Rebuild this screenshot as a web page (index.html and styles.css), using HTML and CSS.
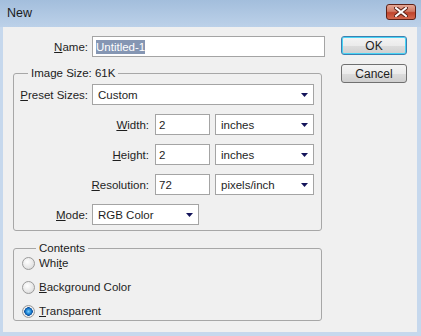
FILE: index.html
```html
<!DOCTYPE html>
<html lang="en">
<head>
    <meta charset="UTF-8">
    <title>New</title>
    <link rel="stylesheet" href="styles.css">
</head>
<body>
<div class="window">
    <div class="titlebar">
        <span class="title">New</span>
        <span class="close">
            <svg width="14" height="10" viewBox="0 0 14 10">
                <path d="M2 1 L12 9 M12 1 L2 9" stroke="#5b2016" stroke-width="4" stroke-linecap="square"/>
                <path d="M2 1 L12 9 M12 1 L2 9" stroke="#ffffff" stroke-width="2" stroke-linecap="square"/>
            </svg>
        </span>
    </div>
    <div class="client">
        <div class="main">
            <div class="row">
                <span class="lbl lbl-short"><u>N</u>ame:</span>
                <div class="field name-field"><span class="selected">Untitled-1</span></div>
            </div>

            <fieldset class="group size-group">
                <legend>Image Size: 61K</legend>
                <div class="row">
                    <span class="lbl lbl-short"><u>P</u>reset Sizes:</span>
                    <div class="select preset-select">Custom<svg class="arrow" width="7" height="4" viewBox="0 0 7 4"><polygon points="0,0 7,0 3.5,4" fill="#14145a"/></svg></div>
                </div>
                <div class="row">
                    <span class="lbl lbl-long"><u>W</u>idth:</span>
                    <div class="field num-field">2</div>
                    <div class="select unit-select">inches<svg class="arrow" width="7" height="4" viewBox="0 0 7 4"><polygon points="0,0 7,0 3.5,4" fill="#14145a"/></svg></div>
                </div>
                <div class="row">
                    <span class="lbl lbl-long"><u>H</u>eight:</span>
                    <div class="field num-field">2</div>
                    <div class="select unit-select">inches<svg class="arrow" width="7" height="4" viewBox="0 0 7 4"><polygon points="0,0 7,0 3.5,4" fill="#14145a"/></svg></div>
                </div>
                <div class="row">
                    <span class="lbl lbl-long"><u>R</u>esolution:</span>
                    <div class="field num-field">72</div>
                    <div class="select unit-select">pixels/inch<svg class="arrow" width="7" height="4" viewBox="0 0 7 4"><polygon points="0,0 7,0 3.5,4" fill="#14145a"/></svg></div>
                </div>
                <div class="row">
                    <span class="lbl lbl-short"><u>M</u>ode:</span>
                    <div class="select mode-select">RGB Color<svg class="arrow" width="7" height="4" viewBox="0 0 7 4"><polygon points="0,0 7,0 3.5,4" fill="#14145a"/></svg></div>
                </div>
            </fieldset>

            <fieldset class="group contents-group">
                <legend>Contents</legend>
                <div class="radio-list">
                    <div class="radio-row"><span class="radio"></span>Whi<u>t</u>e</div>
                    <div class="radio-row"><span class="radio"></span><u>B</u>ackground Color</div>
                    <div class="radio-row"><span class="radio checked"></span><u>T</u>ransparent</div>
                </div>
            </fieldset>
        </div>

        <div class="buttons">
            <div class="btn btn-default">OK</div>
            <div class="btn">Cancel</div>
        </div>
    </div>
</div>
</body>
</html>
```

FILE: styles.css
```css
body {
    margin: 0;
    font-family: "Liberation Sans", Arial, sans-serif;
    font-size: 11.5px;
    color: #1e1e1e;
}
.window {
    width: 421px;
    height: 336px;
    display: flex;
    flex-direction: column;
    background: #c6d8ed;
}
.titlebar {
    height: 27px;
    display: flex;
    align-items: flex-start;
    justify-content: space-between;
    background: linear-gradient(#a3bedc, #bcd1e9);
}
.title {
    font-size: 12.5px;
    color: #1b1b1b;
    padding: 6px 0 0 7px;
}
.close {
    width: 28px;
    height: 14px;
    margin: 4px 5px 0 0;
    border: 1px solid #5e2218;
    border-radius: 3px;
    background: linear-gradient(#e4a795, #d17a64 45%, #c0442c 55%, #d4694f);
    display: flex;
    align-items: center;
    justify-content: center;
}
.client {
    flex: 1;
    margin: 0 4px 4px 3px;
    background: #f0f0f0;
    display: flex;
}
.main {
    width: 312px;
    padding: 9px 0 0 10px;
}
.row {
    display: flex;
    align-items: center;
    height: 21px;
    margin-bottom: 9px;
}
.row:last-child {
    margin-bottom: 0;
}
.lbl {
    text-align: right;
    flex-shrink: 0;
}
.lbl-short {
    width: 74px;
    margin-right: 4px;
}
.main > .row .lbl-short {
    width: 75px;
}
.lbl-long {
    width: 135px;
    margin-right: 6px;
}
.field, .select {
    box-sizing: border-box;
    height: 21px;
    background: #fff;
    border: 1px solid #a4a4a4;
    display: flex;
    align-items: center;
    flex-shrink: 0;
}
.field {
    padding-left: 3px;
}
.name-field {
    width: 233px;
}
.selected {
    background: #8596b3;
    color: #fff;
    padding: 1px 0;
}
.num-field {
    width: 55px;
    margin-right: 5px;
}
.select {
    justify-content: space-between;
    padding: 0 5px 0 5px;
}
.arrow {
    margin-top: 1px;
}
.preset-select {
    width: 222px;
}
.unit-select {
    width: 99px;
}
.mode-select {
    width: 107px;
}
.group {
    box-sizing: border-box;
    width: 309px;
    margin: 0;
    border: 1px solid #a7a7a7;
    border-radius: 3px;
}
.group legend {
    line-height: 14px;
    padding: 0 3px;
    margin-left: 14px;
    color: #1b1b1b;
}
.size-group {
    margin-top: 8px;
    padding: 4px 0 5px 0;
}
.contents-group {
    margin-top: 10px;
    padding: 0 0 0 8px;
}
.radio-list {
    margin: -4px 0 -3px 0;
}
.radio-row {
    height: 24px;
    display: flex;
    align-items: center;
}
.radio {
    box-sizing: border-box;
    width: 13px;
    height: 13px;
    margin-right: 4px;
    border-radius: 50%;
    border: 1px solid #9a9a9a;
    background: radial-gradient(circle at 40% 35%, #ffffff, #e6e6e6 60%, #d0d0d0);
}
.radio.checked {
    background: radial-gradient(circle, #7fd0ff 0, #1e86d6 2.5px, #0d4f9c 4px, #f4f4f4 4.5px, #dcdcdc 6px);
}
.buttons {
    margin-left: 16px;
    padding-top: 9px;
    display: flex;
    flex-direction: column;
    gap: 9px;
}
.btn {
    box-sizing: border-box;
    width: 66px;
    height: 19px;
    border: 1px solid #707070;
    border-radius: 3px;
    background: linear-gradient(#f4f4f4, #ebebeb 50%, #dddddd 51%, #cfcfcf);
    display: flex;
    align-items: center;
    justify-content: center;
    font-size: 12px;
}
.btn-default {
    border-color: #3c7fb1;
    box-shadow: inset 0 0 0 1px #48d4f5;
}
```
